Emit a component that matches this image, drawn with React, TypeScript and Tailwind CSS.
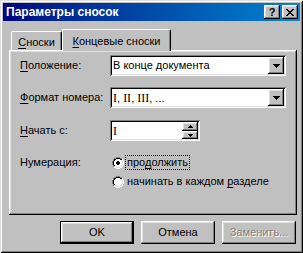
import React from "react";

type PixProps = { rows: string[]; colors: Record<string, string>; className?: string };

function Pix({ rows, colors, className }: PixProps) {
  const rects: React.ReactNode[] = [];
  rows.forEach((r, y) =>
    [...r].forEach((c, x) => {
      if (colors[c]) rects.push(<rect key={`${x}-${y}`} x={x} y={y} width={1} height={1} fill={colors[c]} />);
    })
  );
  return (
    <svg width={rows[0].length} height={rows.length} shapeRendering="crispEdges" className={className}>
      {rects}
    </svg>
  );
}

const RAISED = "shadow-[inset_-1px_-1px_#000,inset_1px_1px_#fff,inset_-2px_-2px_#808080,inset_2px_2px_#dfdfdf]";
const SUNKEN = "shadow-[inset_1px_1px_#808080,inset_-1px_-1px_#fff,inset_2px_2px_#000,inset_-2px_-2px_#dfdfdf]";

const DOWN = ["KKKKKKK", ".KKKKK.", "..KKK..", "...K..."];
const UP_S = ["..K..", ".KKK.", "KKKKK"];
const DOWN_S = ["KKKKK", ".KKK.", "..K.."];
const XGLYPH = ["KK....KK", ".KK..KK.", "..KKKK..", "...KK...", "..KKKK..", ".KK..KK.", "KK....KK"];
const RADIO = [
  "....GGGG....",
  "..GGKKKKGG..",
  ".GKKFFFFKKW.",
  ".GKFFFFFFLW.",
  "GKFFFFFFFFLW",
  "GKFFFFFFFFLW",
  "GKFFFFFFFFLW",
  "GKFFFFFFFFLW",
  ".GKFFFFFFLW.",
  ".GLLFFFFLLW.",
  "..WWLLLLWW..",
  "....WWWW....",
];
const DOT = ["....", ".DD.", "DDDD", "DDDD", ".DD."];
const RADIO_ON = RADIO.map((row, y) =>
  [...row]
    .map((c, x) => {
      const dy = y - 3;
      const dx = x - 4;
      if (dy >= 1 && dy <= 4 && dx >= 0 && dx <= 3 && DOT[dy][dx] === "D") return "D";
      return c;
    })
    .join("")
);
const RC = { G: "#808080", K: "#000", W: "#fff", L: "#dfdfdf", F: "#fff", D: "#000" };

function CapBtn({ children }: { children: React.ReactNode }) {
  return (
    <div className={`w-[16px] h-[14px] bg-[#c0c0c0] flex items-center justify-center ${RAISED}`}>{children}</div>
  );
}

function U({ children }: { children: React.ReactNode }) {
  return <span className="underline underline-offset-[2px] decoration-1">{children}</span>;
}

function Serif({ children }: { children: React.ReactNode }) {
  return <span className="font-['Liberation_Serif',serif] text-[12px]">{children}</span>;
}

function Combo({ children }: { children: React.ReactNode }) {
  return (
    <div className={`w-[176px] h-[21px] bg-white p-[2px] flex items-stretch ${SUNKEN}`}>
      <div className="flex-1 flex items-center pl-[1px] whitespace-nowrap">
        <span>{children}</span>
      </div>
      <div className={`w-[16px] bg-[#c0c0c0] flex items-center justify-center ${RAISED}`}>
        <Pix rows={DOWN} colors={{ K: "#000" }} />
      </div>
    </div>
  );
}

function Button({ children, def, disabled }: { children: React.ReactNode; def?: boolean; disabled?: boolean }) {
  return (
    <div className={`w-[74px] h-[23px] ${def ? "border border-black" : ""}`}>
      <div
        className={`w-full h-full bg-[#c0c0c0] flex items-center justify-center ${RAISED} ${
          disabled ? "text-[#808080] [text-shadow:1px_1px_0_#fff]" : ""
        }`}
      >
        <span>{children}</span>
      </div>
    </div>
  );
}

export default function App() {
  return (
    <div className="w-[303px] h-[253px] bg-[#c0c0c0] p-[3px] flex flex-col font-['Liberation_Sans',sans-serif] text-[11px] leading-none text-black select-none shadow-[inset_1px_1px_#dfdfdf,inset_-1px_-1px_#000,inset_2px_2px_#fff,inset_-2px_-2px_#808080]">
      {/* title bar */}
      <div className="h-[18px] flex items-center bg-linear-to-r from-[#000080] to-[#1084d0] pl-[3px] pr-[2px]">
        <span className="text-white font-bold text-[12px] leading-none">Параметры сносок</span>
        <div className="ml-auto flex gap-[2px]">
          <CapBtn>
            <span className="font-bold text-[11px] leading-none mt-[1px]">?</span>
          </CapBtn>
          <CapBtn>
            <Pix rows={XGLYPH} colors={{ K: "#000" }} />
          </CapBtn>
        </div>
      </div>

      {/* tabs */}
      <div className="mt-[8px] ml-[6px] flex items-end h-[21px] pl-[2px] relative z-10">
        <div className="w-[51px] h-[19px] border-l border-t border-white rounded-tl-[2px] rounded-tr-[2px] shadow-[inset_-1px_0_#808080] border-r border-r-black flex items-center justify-center pt-[2px]">
          <span>
            <U>С</U>носки
          </span>
        </div>
        <div className="w-[109px] h-[22px] -mb-[1px] bg-[#c0c0c0] border-l border-t border-white rounded-tl-[2px] rounded-tr-[2px] border-r border-r-black shadow-[inset_-1px_0_#808080] flex items-start justify-center pt-[6px]">
          <span>
            <U>К</U>онцевые сноски
          </span>
        </div>
      </div>

      {/* panel */}
      <div className={`ml-[6px] mr-[3px] h-[165px] pl-[11px] pt-[5px] flex flex-col ${RAISED}`}>
        <div className="flex items-center h-[21px]">
          <div className="w-[90px]">
            <span>
              <U>П</U>оложение:
            </span>
          </div>
          <Combo>В конце документа</Combo>
        </div>
        <div className="flex items-center h-[21px] mt-[11px]">
          <div className="w-[90px]">
            <span>
              <U>Ф</U>ормат номера:
            </span>
          </div>
          <Combo>
            <Serif>I</Serif>, <Serif>II</Serif>, <Serif>III</Serif>, ...
          </Combo>
        </div>
        <div className="flex items-center h-[21px] mt-[12px]">
          <div className="w-[90px]">
            <span>
              <U>Н</U>ачать с:
            </span>
          </div>
          <div className={`w-[90px] h-[21px] bg-white p-[2px] flex items-stretch ${SUNKEN}`}>
            <div className="flex-1 flex items-center pl-[1px]">
              <Serif>I</Serif>
            </div>
            <div className="w-[16px] flex flex-col">
              <div className={`h-[9px] bg-[#c0c0c0] flex items-center justify-center ${RAISED}`}>
                <Pix rows={UP_S} colors={{ K: "#000" }} />
              </div>
              <div className={`h-[8px] bg-[#c0c0c0] flex items-center justify-center ${RAISED}`}>
                <Pix rows={DOWN_S} colors={{ K: "#000" }} />
              </div>
            </div>
          </div>
        </div>
        <div className="flex mt-[12px]">
          <div className="w-[92px] h-[19px] flex items-center">
            <span>Нумерация:</span>
          </div>
          <div className="flex flex-col">
            <div className="h-[19px] flex items-center">
              <Pix rows={RADIO_ON} colors={RC} />
              <div className="ml-[1px] h-[15px] px-[1px] border border-dotted border-black flex items-center">
                <span>
                  про<U>д</U>олжить
                </span>
              </div>
            </div>
            <div className="h-[19px] flex items-center">
              <Pix rows={RADIO} colors={RC} />
              <div className="ml-[2px] px-[1px] flex items-center">
                <span>
                  начинать в каждом <U>р</U>азделе
                </span>
              </div>
            </div>
          </div>
        </div>
      </div>

      {/* buttons */}
      <div className="mt-[6px] flex justify-end gap-[7px] pr-[4px]">
        <Button def>OK</Button>
        <Button>Отмена</Button>
        <Button disabled>Заменить...</Button>
      </div>
    </div>
  );
}
